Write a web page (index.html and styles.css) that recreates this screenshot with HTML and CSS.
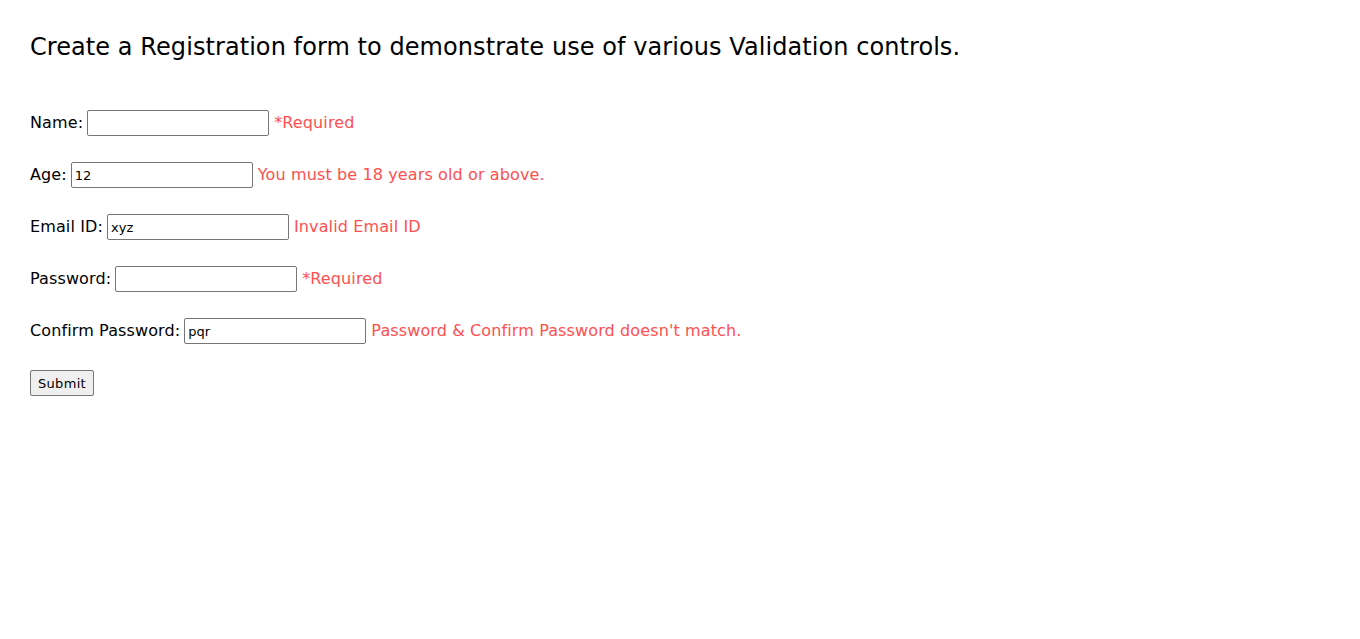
FILE: index.html
```html
<!DOCTYPE html>
<html>
<head>
<meta charset="utf-8">
<link rel="stylesheet" href="styles.css">
</head>
<body>
<div class="page">
  <h2 class="title">Create a Registration form to demonstrate use of various Validation controls.</h2>
  <form class="form">
    <div class="row"><label class="label">Name:</label><input class="field" type="text" value=""><span class="err">*Required</span></div>
    <div class="row"><label class="label">Age:</label><input class="field" type="text" value="12"><span class="err">You must be 18 years old or above.</span></div>
    <div class="row"><label class="label">Email ID:</label><input class="field" type="text" value="xyz"><span class="err">Invalid Email ID</span></div>
    <div class="row"><label class="label">Password:</label><input class="field" type="password" value=""><span class="err">*Required</span></div>
    <div class="row"><label class="label">Confirm Password:</label><input class="field" type="text" value="pqr"><span class="err">Password &amp; Confirm Password doesn't match.</span></div>
    <div class="row"><button class="btn" type="button">Submit</button></div>
  </form>
</div>
</body>
</html>
```
FILE: styles.css
```css
html, body {
  margin: 0;
  padding: 0;
  background: #fff;
}
.page {
  padding: 0 30px;
  font-family: "DejaVu Sans", sans-serif;
  color: #000;
}
.title {
  margin: 0;
  padding-top: 31px;
  font-size: 24px;
  letter-spacing: 0.07px;
  font-weight: normal;
  line-height: 32px;
  height: 32px;
}
.form {
  margin-top: 47px;
  display: flex;
  flex-direction: column;
  gap: 26px;
}
.row {
  display: flex;
  align-items: center;
  height: 26px;
  font-size: 16px;
  letter-spacing: 0.12px;
}
.label {
  margin-right: 4px;
  padding-bottom: 2px;
}
.field {
  box-sizing: border-box;
  width: 182px;
  height: 26px;
  border: 1px solid #767676;
  border-radius: 2px;
  padding: 0 3px;
  font-family: "DejaVu Sans", sans-serif;
  font-size: 13px;
  letter-spacing: 0;
  color: #000;
  margin: 0;
}
.err {
  margin-left: 5px;
  padding-bottom: 2px;
  color: #ff4f4f;
}
.btn {
  box-sizing: border-box;
  width: 64px;
  height: 26px;
  background: #efefef;
  border: 1px solid #767676;
  border-radius: 2px;
  font-family: "DejaVu Sans", sans-serif;
  font-size: 13px;
  letter-spacing: 0.3px;
  color: #000;
  padding: 0;
  margin: 0;
}
```
